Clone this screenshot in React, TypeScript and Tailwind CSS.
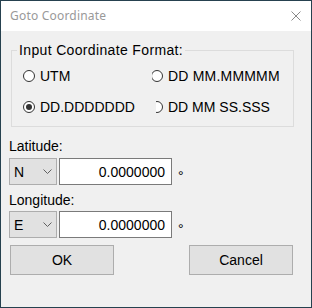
import React from 'react';

const Radio: React.FC<{ checked?: boolean; clip?: string }> = ({ checked, clip = '' }) => (
  <span
    className={`flex size-[12px] shrink-0 items-center justify-center rounded-full border border-[#333333] bg-white ${clip}`}
  >
    {checked && <span className="size-[6px] rounded-full bg-[#333333]"></span>}
  </span>
);

const Chevron: React.FC = () => (
  <svg width="9" height="5" viewBox="0 0 9 5" className="shrink-0">
    <path d="M0.5 0.5 L4.5 4.5 L8.5 0.5" fill="none" stroke="#606060" strokeWidth="1" />
  </svg>
);

const CoordRow: React.FC<{ hemi: string }> = ({ hemi }) => (
  <div className="flex items-center">
    <div className="flex h-[27px] w-[48px] items-center justify-between border border-[#adadad] bg-[#e1e1e1] pl-[4px] pr-[4px]">
      <span>{hemi}</span>
      <Chevron />
    </div>
    <div className="ml-[2px] flex h-[27px] w-[113px] items-center justify-end border border-[#7a7a7a] bg-white pr-[6px]">
      0.0000000
    </div>
    <span className="ml-[6px] pt-[9px]">°</span>
  </div>
);

const App: React.FC = () => {
  return (
    <div className="flex h-[308px] w-[312px] flex-col border border-[#26414f] bg-[#f0f0f0] font-['Liberation_Sans',Arial,sans-serif] text-[14px] leading-4 text-black">
      <div className="flex h-[30px] shrink-0 items-center justify-between bg-white pl-[9px] pr-[10px]">
        <span className="font-['Noto_Sans',sans-serif] text-[12px] tracking-[0.2px] text-[#999999]">Goto Coordinate</span>
        <svg width="10" height="10" viewBox="0 0 10 10">
          <path d="M0.5 0.5 L9.5 9.5 M9.5 0.5 L0.5 9.5" stroke="#8a8a8a" strokeWidth="1" />
        </svg>
      </div>

      <div className="flex flex-col pl-[8px]">
        <fieldset className="ml-[2px] mt-[11px] w-[283px] border border-[#dcdcdc] pb-[11px]">
          <legend className="ml-[5px] px-[2px] tracking-[0.35px]">Input Coordinate Format:</legend>
          <div className="mt-[10px] grid grid-cols-[128px_1fr] gap-y-[15px] pl-[11px]">
            <label className="flex items-center gap-[5px]">
              <Radio />
              <span>UTM</span>
            </label>
            <label className="flex items-center gap-[5px]">
              <Radio clip="[clip-path:inset(0_0_0_1px)]" />
              <span className="tracking-[0.2px]">DD MM.MMMMM</span>
            </label>
            <label className="flex items-center gap-[5px]">
              <Radio checked />
              <span>DD.DDDDDDD</span>
            </label>
            <label className="flex items-center gap-[5px]">
              <Radio clip="[clip-path:inset(0_0_0_5px)]" />
              <span>DD MM SS.SSS</span>
            </label>
          </div>
        </fieldset>

        <div className="mt-[11px]">Latitude:</div>
        <div className="mt-[4px]">
          <CoordRow hemi="N" />
        </div>

        <div className="mt-[7px]">Longitude:</div>
        <div className="mt-[3px]">
          <CoordRow hemi="E" />
        </div>

        <div className="mt-[7px] flex w-[284px] justify-between pl-[1px]">
          <button className="h-[30px] w-[104px] border border-[#adadad] bg-[#e1e1e1]">OK</button>
          <button className="h-[30px] w-[104px] border border-[#adadad] bg-[#e1e1e1]">Cancel</button>
        </div>
      </div>
    </div>
  );
};

export default App;
